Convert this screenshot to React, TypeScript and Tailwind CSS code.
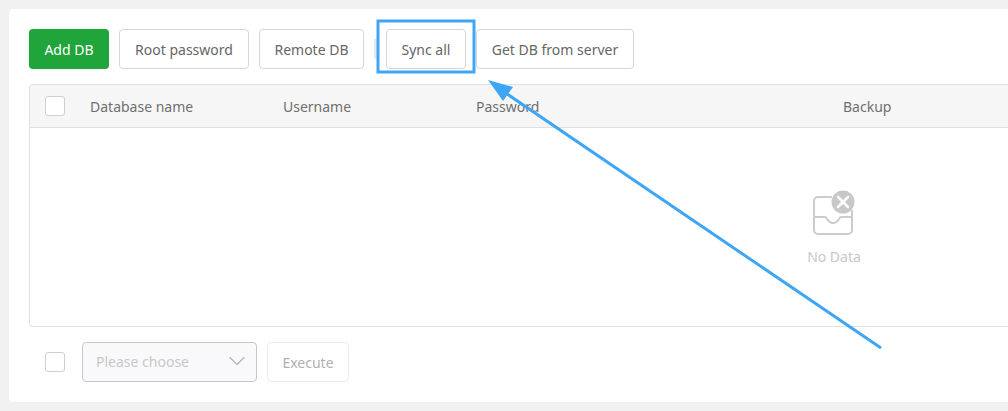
import { ChevronDown } from "lucide-react";

const btn =
  "h-10 rounded border border-[#d6d6d6] bg-white text-[14px] text-[#666] flex items-center justify-center";

function EmptyIcon() {
  return (
    <svg width="42" height="46" viewBox="0 0 42 46" fill="none">
      <path
        d="M19 7H5A4 4 0 0 0 1 11V40A4 4 0 0 0 5 44H35A4 4 0 0 0 39 40V20"
        stroke="#cccccc"
        strokeWidth="2"
      />
      <path
        d="M1 27H12C14 27 14 33 20 33C26 33 26 27 28 27H39"
        stroke="#cccccc"
        strokeWidth="2"
      />
      <circle cx="30" cy="12" r="11.500" fill="#c8c8c8" />
      <path d="M25 7L35 17M35 7L25 17" stroke="white" strokeWidth="2.500" strokeLinecap="round" />
    </svg>
  );
}

export default function App() {
  return (
    <div className="relative h-[411px] w-[1008px] overflow-hidden bg-[#f1f1f1] pl-[9px] pt-[9px] font-['Noto_Sans',sans-serif]">
      <div className="h-[393px] w-[1020px] rounded-l bg-white pl-5 pt-5">
        {/* toolbar */}
        <div className="flex items-center">
          <button className="mr-[10px] flex h-10 w-20 items-center justify-center rounded bg-[#20a53a] text-[14px] text-white">
            Add DB
          </button>
          <button className={`${btn} mr-[10px] w-[130px]`}>Root password</button>
          <button className={`${btn} mr-[10px] w-[105px]`}>Remote DB</button>
          <div className="mr-[9px] h-5 w-[3px] bg-[#e6e8ec]" />
          <button className={`${btn} mr-[10px] w-20`}>Sync all</button>
          <button className={`${btn} w-[158px]`}>Get DB from server</button>
        </div>

        {/* table */}
        <div className="mt-[15px] h-[243px] rounded-l border border-r-0 border-[#e0e0e0]">
          <div className="flex h-[43px] items-center border-b border-[#e0e0e0] bg-[#f6f6f6] text-[14px] text-[#707070]">
            <div className="ml-[15px] h-5 w-5 rounded-[3px] border border-[#cfcfcf] bg-white" />
            <div className="ml-[25px] w-[193px]">Database name</div>
            <div className="w-[193px]">Username</div>
            <div className="w-[367px]">Password</div>
            <div>Backup</div>
          </div>
          <div className="flex h-[198px] flex-col items-center pl-[609px] pt-[62px]">
            <EmptyIcon />
            <div className="mt-[10px] text-[14px] text-[#c8c8c8]">No Data</div>
          </div>
        </div>

        {/* bulk actions */}
        <div className="mt-[15px] flex items-center">
          <div className="ml-4 h-5 w-5 rounded-[3px] border border-[#cfcfcf] bg-white" />
          <div className="ml-[17px] flex h-10 w-[175px] items-center justify-between rounded border border-[#c8c8c8] bg-[#f9f9fb] pb-[2px] pl-[13px] pr-[5px] text-[14px] text-[#c8c8c8]">
            <span>Please choose</span>
            <ChevronDown size={28} strokeWidth={1} className="text-[#b4b4b4]" />
          </div>
          <button className="ml-[10px] flex h-10 w-[82px] items-center justify-center rounded border border-[#ebebeb] bg-white text-[14px] text-[#b0b0b0]">
            Execute
          </button>
        </div>
      </div>

      {/* annotation drawn on top of the screenshot */}
      <svg className="absolute left-0 top-0" width="1008" height="411" fill="none">
        <rect x="378" y="21" width="96" height="51" stroke="#3ea6f5" strokeWidth="3" />
        <path d="M881 348L507 94" stroke="#3ea6f5" strokeWidth="3" />
        <path d="M488 80L513 87L503 101Z" fill="#3ea6f5" />
      </svg>
    </div>
  );
}
